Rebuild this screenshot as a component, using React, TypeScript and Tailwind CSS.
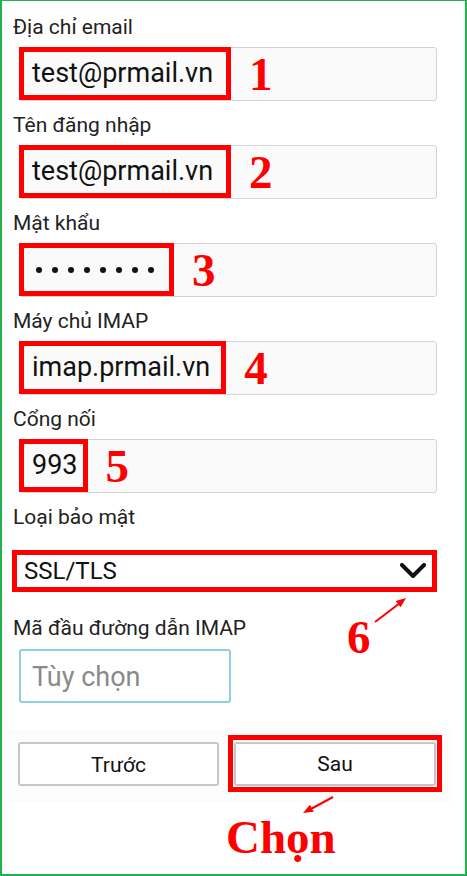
import React from "react";

interface FieldProps {
  label: string;
  mark: string;
  value?: string;
  dots?: number;
  padRight?: string;
}

function Field({ label, mark, value, dots, padRight = "pr-[8px]" }: FieldProps) {
  return (
    <div className="mb-[12px]">
      <p className="h-[24px] text-[21px] leading-[24px] text-[#222]">{label}</p>
      <div className="mt-[8px] ml-[6px] flex h-[54px] w-[418px] items-center rounded-[3px] border border-[#d4d4d4] bg-[#fafafa]">
        {dots ? (
          <div className="-mt-px -ml-px flex h-[53px] items-center gap-[10px] self-start border-[5px] border-[#ff0000] pr-[15px] pl-[12px]">
            {Array.from({ length: dots }).map((_, i) => (
              <span key={i} className="h-[6px] w-[6px] rounded-full bg-[#111]" />
            ))}
          </div>
        ) : (
          <div
            className={`-mt-px -ml-px flex h-[53px] items-center self-start border-[5px] border-[#ff0000] pl-[8px] text-[27px] text-[#111] ${padRight}`}
          >
            {value}
          </div>
        )}
        <span className="ml-[18px] font-['Liberation_Serif',serif] text-[47px] leading-none font-bold text-[#ff0000]">
          {mark}
        </span>
      </div>
    </div>
  );
}

export default function App() {
  return (
    <div className="relative h-[876px] w-[467px] overflow-hidden border-x-2 border-t border-b-2 border-[#22b14c] bg-white font-[Roboto,sans-serif]">
      <div className="pt-[14px] pl-[11px]">
        <Field label="Địa chỉ email" value="test@prmail.vn" mark="1" padRight="pr-[13px]" />
        <Field label="Tên đăng nhập" value="test@prmail.vn" mark="2" padRight="pr-[13px]" />
        <Field label="Mật khẩu" dots={8} mark="3" />
        <Field label="Máy chủ IMAP" value="imap.prmail.vn" mark="4" padRight="pr-[11px]" />
        <Field label="Cổng nối" value="993" mark="5" padRight="pr-[5px]" />

        <p className="h-[24px] text-[21px] leading-[24px] text-[#222]">Loại bảo mật</p>
        <div className="mt-[21px] -ml-px flex h-[42px] w-[425px] items-center justify-between border-[5px] border-[#ff0000] pr-[6px] pl-[7px]">
          <span className="text-[24px] text-[#111]">SSL/TLS</span>
          <svg width="26" height="16" viewBox="0 0 26 16" fill="none">
            <polyline points="2,2 13,13 24,2" stroke="#111" strokeWidth="4" strokeLinecap="round" strokeLinejoin="round" />
          </svg>
        </div>

        <p className="mt-[24px] h-[24px] text-[21px] leading-[24px] text-[#222]">Mã đầu đường dẫn IMAP</p>
        <div className="mt-[9px] ml-[6px] flex h-[54px] w-[212px] items-center rounded-[3px] border-2 border-[#8fcfe0] bg-white px-[11px] pt-[2px] text-[27px] text-[#8a8a8a]">
          Tùy chọn
        </div>

        <div className="mt-[27px] -ml-[5px] flex h-[72px] w-[444px] items-start gap-[9px] bg-[#fcfcfc] pt-[5px] pl-[10px]">
          <button className="mt-[7px] flex h-[44px] w-[201px] items-center justify-center rounded-[3px] border-2 border-[#c6c6c6] bg-white pt-[3px] text-[21px] text-[#111]">
            Trước
          </button>
          <div className="flex h-[57px] w-[214px] items-center justify-center border-[5px] border-[#ff0000]">
            <button className="flex h-[44px] w-[202px] items-center justify-center rounded-[3px] border-2 border-[#c6c6c6] bg-white pt-[3px] text-[21px] text-[#111]">
              Sau
            </button>
          </div>
        </div>

        <p className="mt-[12px] ml-[213px] font-['Liberation_Serif',serif] text-[47px] leading-none font-bold text-[#ff0000]">
          Chọn
        </p>
      </div>

      <span className="absolute top-[613px] left-[345px] font-['Liberation_Serif',serif] text-[47px] leading-none font-bold text-[#ff0000]">
        6
      </span>

      <svg className="pointer-events-none absolute -top-px -left-[2px]" width="467" height="876" viewBox="0 0 467 876">
        <line x1="375" y1="622" x2="400" y2="603" stroke="#ff0000" strokeWidth="2" />
        <polygon points="406,598 400.5,607.3 395.6,600.9" fill="#ff0000" />
        <line x1="333" y1="797" x2="309" y2="810" stroke="#ff0000" strokeWidth="2" />
        <polygon points="303,813 313.7,811.8 309.9,804.8" fill="#ff0000" />
      </svg>
    </div>
  );
}
